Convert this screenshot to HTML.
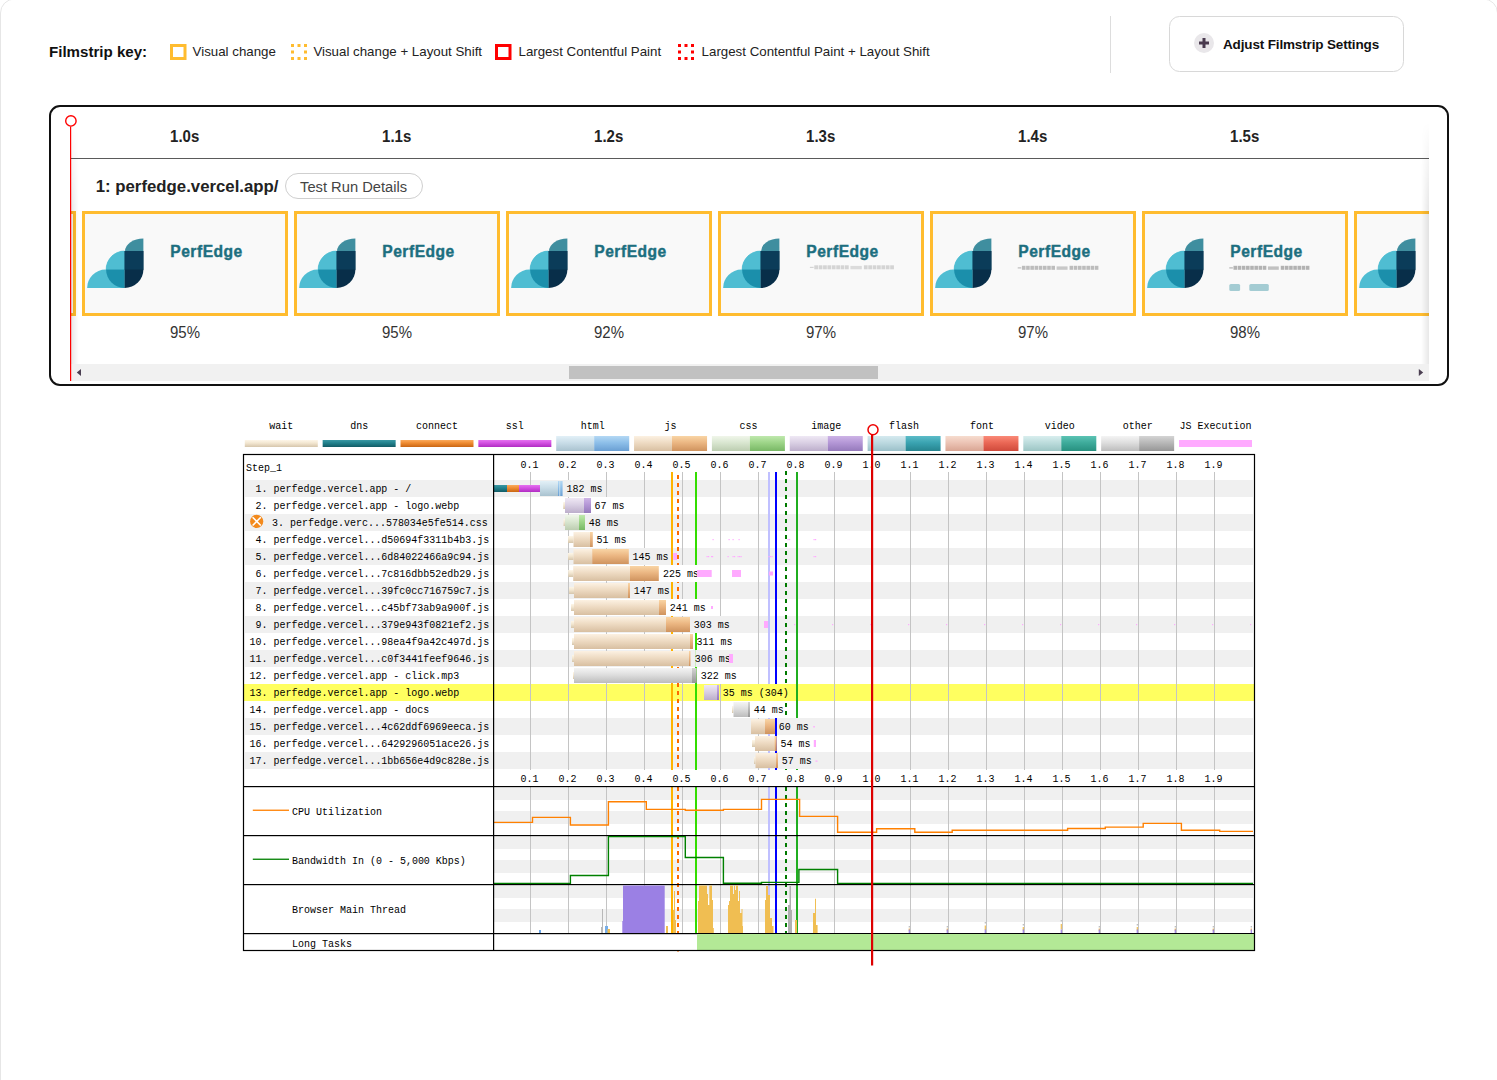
<!DOCTYPE html><html><head><meta charset="utf-8"><style>html,body{margin:0;padding:0;background:#fff;}body{width:1497px;height:1080px;overflow:hidden;position:relative;}svg{position:absolute;left:0;top:0;font-family:"Liberation Sans",sans-serif;}</style></head><body><svg width="1497" height="1080" viewBox="0 0 1497 1080"><rect x="0.5" y="-1" width="1497" height="1300" rx="14" fill="none" stroke="#e6e6e6" stroke-width="1"/>
<text x="49" y="56.9" text-anchor="start" style="font-size:15.1px;font-weight:bold;fill:#111" >Filmstrip key:</text>
<rect x="171.5" y="45.5" width="13.5" height="13" fill="none" stroke="#ffbc2f" stroke-width="3"/>
<text x="192.6" y="55.8" text-anchor="start" style="font-size:13.3px;font-weight:normal;fill:#222" >Visual change</text>
<rect x="291.0" y="44.0" width="3" height="3" fill="#ffbc2f" />
<rect x="291.0" y="50.5" width="3" height="3" fill="#ffbc2f" />
<rect x="291.0" y="57.0" width="3" height="3" fill="#ffbc2f" />
<rect x="297.5" y="44.0" width="3" height="3" fill="#ffbc2f" />
<rect x="297.5" y="57.0" width="3" height="3" fill="#ffbc2f" />
<rect x="304.0" y="44.0" width="3" height="3" fill="#ffbc2f" />
<rect x="304.0" y="50.5" width="3" height="3" fill="#ffbc2f" />
<rect x="304.0" y="57.0" width="3" height="3" fill="#ffbc2f" />
<text x="313.4" y="55.8" text-anchor="start" style="font-size:13.3px;font-weight:normal;fill:#222" >Visual change + Layout Shift</text>
<rect x="496.5" y="45.5" width="13.5" height="13" fill="none" stroke="#ff0000" stroke-width="3"/>
<text x="518.5" y="55.8" text-anchor="start" style="font-size:13.3px;font-weight:normal;fill:#222" >Largest Contentful Paint</text>
<rect x="678.0" y="44.0" width="3" height="3" fill="#ff0000" />
<rect x="678.0" y="50.5" width="3" height="3" fill="#ff0000" />
<rect x="678.0" y="57.0" width="3" height="3" fill="#ff0000" />
<rect x="684.5" y="44.0" width="3" height="3" fill="#ff0000" />
<rect x="684.5" y="57.0" width="3" height="3" fill="#ff0000" />
<rect x="691.0" y="44.0" width="3" height="3" fill="#ff0000" />
<rect x="691.0" y="50.5" width="3" height="3" fill="#ff0000" />
<rect x="691.0" y="57.0" width="3" height="3" fill="#ff0000" />
<text x="701.6" y="55.8" text-anchor="start" style="font-size:13.3px;font-weight:normal;fill:#222" >Largest Contentful Paint + Layout Shift</text>
<rect x="1110" y="16" width="1" height="57" fill="#dddddd" />
<rect x="1169.5" y="16.5" width="234" height="55" rx="10" fill="#fff" stroke="#d8d8d8" stroke-width="1"/>
<circle cx="1204" cy="43" r="10" fill="#e9e7ea"/>
<rect x="1199" y="41.5" width="10" height="3" fill="#4a3a4e" />
<rect x="1202.5" y="38" width="3" height="10" fill="#4a3a4e" />
<text x="1223" y="49.1" text-anchor="start" style="font-size:13.5px;font-weight:bold;fill:#111;letter-spacing:-0.15px" >Adjust Filmstrip Settings</text>
<rect x="50" y="106" width="1398" height="279" rx="10" fill="#fff" stroke="#111" stroke-width="2"/>
<defs><clipPath id="sc"><rect x="71" y="110" width="1358" height="272"/></clipPath><linearGradient id="shl" x1="0" x2="1" y1="0" y2="0"><stop offset="0" stop-color="#000" stop-opacity="0.09"/><stop offset="1" stop-color="#000" stop-opacity="0"/></linearGradient><linearGradient id="shr" x1="1" x2="0" y1="0" y2="0"><stop offset="0" stop-color="#000" stop-opacity="0.09"/><stop offset="1" stop-color="#000" stop-opacity="0"/></linearGradient><linearGradient id="vg" x1="0" x2="0" y1="0" y2="1"><stop offset="0" stop-color="#fff" stop-opacity="0"/><stop offset="0.35" stop-color="#fff" stop-opacity="1"/><stop offset="1" stop-color="#fff" stop-opacity="1"/></linearGradient><mask id="vm" maskUnits="userSpaceOnUse" x="0" y="0" width="1497" height="1080"><rect x="60" y="122" width="1380" height="242" fill="url(#vg)"/></mask></defs>
<g clip-path="url(#sc)">
<text transform="translate(184.7,141.9) scale(1,1.15)" text-anchor="middle" style="font-size:15px;font-weight:bold;fill:#222" >1.0s</text>
<text transform="translate(396.7,141.9) scale(1,1.15)" text-anchor="middle" style="font-size:15px;font-weight:bold;fill:#222" >1.1s</text>
<text transform="translate(608.7,141.9) scale(1,1.15)" text-anchor="middle" style="font-size:15px;font-weight:bold;fill:#222" >1.2s</text>
<text transform="translate(820.7,141.9) scale(1,1.15)" text-anchor="middle" style="font-size:15px;font-weight:bold;fill:#222" >1.3s</text>
<text transform="translate(1032.7,141.9) scale(1,1.15)" text-anchor="middle" style="font-size:15px;font-weight:bold;fill:#222" >1.4s</text>
<text transform="translate(1244.7,141.9) scale(1,1.15)" text-anchor="middle" style="font-size:15px;font-weight:bold;fill:#222" >1.5s</text>
<text transform="translate(1456.7,141.9) scale(1,1.15)" text-anchor="middle" style="font-size:15px;font-weight:bold;fill:#222" >1.6s</text>
<rect x="71" y="158" width="1358" height="1" fill="#5a5a5a" />
<text x="95.7" y="191.7" text-anchor="start" style="font-size:16.8px;font-weight:bold;fill:#222" >1: perfedge.vercel.app/</text>
<rect x="285.5" y="173.5" width="137" height="25" rx="12.5" fill="#fff" stroke="#cfcfcf" stroke-width="1"/>
<text x="300.1" y="191.7" text-anchor="start" style="font-size:14.7px;font-weight:normal;fill:#444" >Test Run Details</text>
<rect x="-128.5" y="212.5" width="203" height="102" fill="#f9f9f9" stroke="#ffbc2f" stroke-width="3"/>
<g transform="translate(-212.9,0)">
<path d="M107 269.5 A18.5 18.5 0 0 1 125.5 251 L125.5 269.5 Z" fill="#4fbdd2" stroke="#4fbdd2" stroke-width="0.6"/>
<rect x="125.2" y="251" width="19.1" height="19" fill="#0b3c59"/>
<path d="M88 288 A18.5 18.5 0 0 1 106.5 269.5 L125.5 269.5 L125.5 288 Z" fill="#4fbdd2"/>
<path d="M107 269.5 A18.5 18.5 0 0 1 125.5 251 L125.5 269.5 Z" fill="#4fbdd2"/>
<path d="M107 269.5 A18.5 18.5 0 0 0 125.5 288 L125.5 269.5 Z" fill="#1b8fab"/>
<path d="M126 251 A18.3 12.4 0 0 1 144.3 238.6 L144.3 251 Z" fill="#3f8e9f"/>
<rect x="125.5" y="251" width="18.8" height="18.5" fill="#0b3c59"/>
<path d="M125.5 269.5 L144.3 269.5 A18.8 18.5 0 0 1 125.5 288 Z" fill="#082e49"/>
</g>
<text x="-41.7" y="256.6" text-anchor="start" style="font-size:15.6px;font-weight:bold;fill:#1c6f80;letter-spacing:0.5px" stroke="#1c6f80" stroke-width="0.4">PerfEdge</text>
<rect x="83.5" y="212.5" width="203" height="102" fill="#f9f9f9" stroke="#ffbc2f" stroke-width="3"/>
<g transform="translate(-0.9,0)">
<path d="M107 269.5 A18.5 18.5 0 0 1 125.5 251 L125.5 269.5 Z" fill="#4fbdd2" stroke="#4fbdd2" stroke-width="0.6"/>
<rect x="125.2" y="251" width="19.1" height="19" fill="#0b3c59"/>
<path d="M88 288 A18.5 18.5 0 0 1 106.5 269.5 L125.5 269.5 L125.5 288 Z" fill="#4fbdd2"/>
<path d="M107 269.5 A18.5 18.5 0 0 1 125.5 251 L125.5 269.5 Z" fill="#4fbdd2"/>
<path d="M107 269.5 A18.5 18.5 0 0 0 125.5 288 L125.5 269.5 Z" fill="#1b8fab"/>
<path d="M126 251 A18.3 12.4 0 0 1 144.3 238.6 L144.3 251 Z" fill="#3f8e9f"/>
<rect x="125.5" y="251" width="18.8" height="18.5" fill="#0b3c59"/>
<path d="M125.5 269.5 L144.3 269.5 A18.8 18.5 0 0 1 125.5 288 Z" fill="#082e49"/>
</g>
<text x="170.3" y="256.6" text-anchor="start" style="font-size:15.6px;font-weight:bold;fill:#1c6f80;letter-spacing:0.5px" stroke="#1c6f80" stroke-width="0.4">PerfEdge</text>
<text transform="translate(185,338) scale(1,1.15)" text-anchor="middle" style="font-size:15px;font-weight:normal;fill:#333" >95%</text>
<rect x="295.5" y="212.5" width="203" height="102" fill="#f9f9f9" stroke="#ffbc2f" stroke-width="3"/>
<g transform="translate(211.1,0)">
<path d="M107 269.5 A18.5 18.5 0 0 1 125.5 251 L125.5 269.5 Z" fill="#4fbdd2" stroke="#4fbdd2" stroke-width="0.6"/>
<rect x="125.2" y="251" width="19.1" height="19" fill="#0b3c59"/>
<path d="M88 288 A18.5 18.5 0 0 1 106.5 269.5 L125.5 269.5 L125.5 288 Z" fill="#4fbdd2"/>
<path d="M107 269.5 A18.5 18.5 0 0 1 125.5 251 L125.5 269.5 Z" fill="#4fbdd2"/>
<path d="M107 269.5 A18.5 18.5 0 0 0 125.5 288 L125.5 269.5 Z" fill="#1b8fab"/>
<path d="M126 251 A18.3 12.4 0 0 1 144.3 238.6 L144.3 251 Z" fill="#3f8e9f"/>
<rect x="125.5" y="251" width="18.8" height="18.5" fill="#0b3c59"/>
<path d="M125.5 269.5 L144.3 269.5 A18.8 18.5 0 0 1 125.5 288 Z" fill="#082e49"/>
</g>
<text x="382.3" y="256.6" text-anchor="start" style="font-size:15.6px;font-weight:bold;fill:#1c6f80;letter-spacing:0.5px" stroke="#1c6f80" stroke-width="0.4">PerfEdge</text>
<text transform="translate(397,338) scale(1,1.15)" text-anchor="middle" style="font-size:15px;font-weight:normal;fill:#333" >95%</text>
<rect x="507.5" y="212.5" width="203" height="102" fill="#f9f9f9" stroke="#ffbc2f" stroke-width="3"/>
<g transform="translate(423.1,0)">
<path d="M107 269.5 A18.5 18.5 0 0 1 125.5 251 L125.5 269.5 Z" fill="#4fbdd2" stroke="#4fbdd2" stroke-width="0.6"/>
<rect x="125.2" y="251" width="19.1" height="19" fill="#0b3c59"/>
<path d="M88 288 A18.5 18.5 0 0 1 106.5 269.5 L125.5 269.5 L125.5 288 Z" fill="#4fbdd2"/>
<path d="M107 269.5 A18.5 18.5 0 0 1 125.5 251 L125.5 269.5 Z" fill="#4fbdd2"/>
<path d="M107 269.5 A18.5 18.5 0 0 0 125.5 288 L125.5 269.5 Z" fill="#1b8fab"/>
<path d="M126 251 A18.3 12.4 0 0 1 144.3 238.6 L144.3 251 Z" fill="#3f8e9f"/>
<rect x="125.5" y="251" width="18.8" height="18.5" fill="#0b3c59"/>
<path d="M125.5 269.5 L144.3 269.5 A18.8 18.5 0 0 1 125.5 288 Z" fill="#082e49"/>
</g>
<text x="594.3" y="256.6" text-anchor="start" style="font-size:15.6px;font-weight:bold;fill:#1c6f80;letter-spacing:0.5px" stroke="#1c6f80" stroke-width="0.4">PerfEdge</text>
<text transform="translate(609,338) scale(1,1.15)" text-anchor="middle" style="font-size:15px;font-weight:normal;fill:#333" >92%</text>
<rect x="719.5" y="212.5" width="203" height="102" fill="#f9f9f9" stroke="#ffbc2f" stroke-width="3"/>
<g transform="translate(635.1,0)">
<path d="M107 269.5 A18.5 18.5 0 0 1 125.5 251 L125.5 269.5 Z" fill="#4fbdd2" stroke="#4fbdd2" stroke-width="0.6"/>
<rect x="125.2" y="251" width="19.1" height="19" fill="#0b3c59"/>
<path d="M88 288 A18.5 18.5 0 0 1 106.5 269.5 L125.5 269.5 L125.5 288 Z" fill="#4fbdd2"/>
<path d="M107 269.5 A18.5 18.5 0 0 1 125.5 251 L125.5 269.5 Z" fill="#4fbdd2"/>
<path d="M107 269.5 A18.5 18.5 0 0 0 125.5 288 L125.5 269.5 Z" fill="#1b8fab"/>
<path d="M126 251 A18.3 12.4 0 0 1 144.3 238.6 L144.3 251 Z" fill="#3f8e9f"/>
<rect x="125.5" y="251" width="18.8" height="18.5" fill="#0b3c59"/>
<path d="M125.5 269.5 L144.3 269.5 A18.8 18.5 0 0 1 125.5 288 Z" fill="#082e49"/>
</g>
<text x="806.3" y="256.6" text-anchor="start" style="font-size:15.6px;font-weight:bold;fill:#1c6f80;letter-spacing:0.5px" stroke="#1c6f80" stroke-width="0.4">PerfEdge</text>
<text transform="translate(821,338) scale(1,1.15)" text-anchor="middle" style="font-size:15px;font-weight:normal;fill:#333" >97%</text>
<g fill="#b0b0b0" opacity="0.5">
<rect x="809.90" y="266.8" width="3.73" height="1.2"/>
<rect x="814.29" y="265.3" width="3.73" height="4"/>
<rect x="818.68" y="265.3" width="3.73" height="4"/>
<rect x="823.06" y="265.3" width="3.73" height="4"/>
<rect x="827.45" y="265.3" width="3.73" height="4"/>
<rect x="831.84" y="265.3" width="3.73" height="4"/>
<rect x="836.23" y="265.3" width="3.73" height="4"/>
<rect x="840.61" y="265.3" width="3.73" height="4"/>
<rect x="845.00" y="265.3" width="3.73" height="4"/>
<rect x="850.41" y="265.90000000000003" width="11.41" height="3.4" opacity="0.8"/>
<rect x="863.87" y="265.3" width="3.73" height="4"/>
<rect x="868.26" y="265.3" width="3.73" height="4"/>
<rect x="872.64" y="265.3" width="3.73" height="4"/>
<rect x="877.03" y="265.3" width="3.73" height="4"/>
<rect x="881.42" y="265.3" width="3.73" height="4"/>
<rect x="885.81" y="265.3" width="3.73" height="4"/>
<rect x="890.20" y="265.3" width="3.73" height="4"/>
</g>
<rect x="931.5" y="212.5" width="203" height="102" fill="#f9f9f9" stroke="#ffbc2f" stroke-width="3"/>
<g transform="translate(847.1,0)">
<path d="M107 269.5 A18.5 18.5 0 0 1 125.5 251 L125.5 269.5 Z" fill="#4fbdd2" stroke="#4fbdd2" stroke-width="0.6"/>
<rect x="125.2" y="251" width="19.1" height="19" fill="#0b3c59"/>
<path d="M88 288 A18.5 18.5 0 0 1 106.5 269.5 L125.5 269.5 L125.5 288 Z" fill="#4fbdd2"/>
<path d="M107 269.5 A18.5 18.5 0 0 1 125.5 251 L125.5 269.5 Z" fill="#4fbdd2"/>
<path d="M107 269.5 A18.5 18.5 0 0 0 125.5 288 L125.5 269.5 Z" fill="#1b8fab"/>
<path d="M126 251 A18.3 12.4 0 0 1 144.3 238.6 L144.3 251 Z" fill="#3f8e9f"/>
<rect x="125.5" y="251" width="18.8" height="18.5" fill="#0b3c59"/>
<path d="M125.5 269.5 L144.3 269.5 A18.8 18.5 0 0 1 125.5 288 Z" fill="#082e49"/>
</g>
<text x="1018.3" y="256.6" text-anchor="start" style="font-size:15.6px;font-weight:bold;fill:#1c6f80;letter-spacing:0.5px" stroke="#1c6f80" stroke-width="0.4">PerfEdge</text>
<text transform="translate(1033,338) scale(1,1.15)" text-anchor="middle" style="font-size:15px;font-weight:normal;fill:#333" >97%</text>
<g fill="#808080" opacity="0.5">
<rect x="1017.70" y="267.3" width="3.58" height="1.2"/>
<rect x="1021.91" y="265.8" width="3.58" height="4"/>
<rect x="1026.13" y="265.8" width="3.58" height="4"/>
<rect x="1030.34" y="265.8" width="3.58" height="4"/>
<rect x="1034.56" y="265.8" width="3.58" height="4"/>
<rect x="1038.77" y="265.8" width="3.58" height="4"/>
<rect x="1042.99" y="265.8" width="3.58" height="4"/>
<rect x="1047.20" y="265.8" width="3.58" height="4"/>
<rect x="1051.41" y="265.8" width="3.58" height="4"/>
<rect x="1056.59" y="266.40000000000003" width="10.96" height="3.4" opacity="0.8"/>
<rect x="1069.54" y="265.8" width="3.58" height="4"/>
<rect x="1073.75" y="265.8" width="3.58" height="4"/>
<rect x="1077.96" y="265.8" width="3.58" height="4"/>
<rect x="1082.18" y="265.8" width="3.58" height="4"/>
<rect x="1086.39" y="265.8" width="3.58" height="4"/>
<rect x="1090.61" y="265.8" width="3.58" height="4"/>
<rect x="1094.82" y="265.8" width="3.58" height="4"/>
</g>
<rect x="1143.5" y="212.5" width="203" height="102" fill="#f9f9f9" stroke="#ffbc2f" stroke-width="3"/>
<g transform="translate(1059.1,0)">
<path d="M107 269.5 A18.5 18.5 0 0 1 125.5 251 L125.5 269.5 Z" fill="#4fbdd2" stroke="#4fbdd2" stroke-width="0.6"/>
<rect x="125.2" y="251" width="19.1" height="19" fill="#0b3c59"/>
<path d="M88 288 A18.5 18.5 0 0 1 106.5 269.5 L125.5 269.5 L125.5 288 Z" fill="#4fbdd2"/>
<path d="M107 269.5 A18.5 18.5 0 0 1 125.5 251 L125.5 269.5 Z" fill="#4fbdd2"/>
<path d="M107 269.5 A18.5 18.5 0 0 0 125.5 288 L125.5 269.5 Z" fill="#1b8fab"/>
<path d="M126 251 A18.3 12.4 0 0 1 144.3 238.6 L144.3 251 Z" fill="#3f8e9f"/>
<rect x="125.5" y="251" width="18.8" height="18.5" fill="#0b3c59"/>
<path d="M125.5 269.5 L144.3 269.5 A18.8 18.5 0 0 1 125.5 288 Z" fill="#082e49"/>
</g>
<text x="1230.3" y="256.6" text-anchor="start" style="font-size:15.6px;font-weight:bold;fill:#1c6f80;letter-spacing:0.5px" stroke="#1c6f80" stroke-width="0.4">PerfEdge</text>
<text transform="translate(1245,338) scale(1,1.15)" text-anchor="middle" style="font-size:15px;font-weight:normal;fill:#333" >98%</text>
<g fill="#6e6e6e" opacity="0.5">
<rect x="1229.30" y="267.3" width="3.56" height="1.2"/>
<rect x="1233.48" y="265.8" width="3.56" height="4"/>
<rect x="1237.67" y="265.8" width="3.56" height="4"/>
<rect x="1241.85" y="265.8" width="3.56" height="4"/>
<rect x="1246.03" y="265.8" width="3.56" height="4"/>
<rect x="1250.22" y="265.8" width="3.56" height="4"/>
<rect x="1254.40" y="265.8" width="3.56" height="4"/>
<rect x="1258.59" y="265.8" width="3.56" height="4"/>
<rect x="1262.77" y="265.8" width="3.56" height="4"/>
<rect x="1267.91" y="266.40000000000003" width="10.88" height="3.4" opacity="0.8"/>
<rect x="1280.76" y="265.8" width="3.56" height="4"/>
<rect x="1284.94" y="265.8" width="3.56" height="4"/>
<rect x="1289.13" y="265.8" width="3.56" height="4"/>
<rect x="1293.31" y="265.8" width="3.56" height="4"/>
<rect x="1297.49" y="265.8" width="3.56" height="4"/>
<rect x="1301.68" y="265.8" width="3.56" height="4"/>
<rect x="1305.86" y="265.8" width="3.56" height="4"/>
</g>
<rect x="1229.3" y="284" width="10.8" height="7" rx="1.5" fill="#a4ccd3"/>
<rect x="1249.3" y="284" width="19.5" height="7" rx="1.5" fill="#a4ccd3"/>
<rect x="1355.5" y="212.5" width="203" height="102" fill="#f9f9f9" stroke="#ffbc2f" stroke-width="3"/>
<g transform="translate(1271.1,0)">
<path d="M107 269.5 A18.5 18.5 0 0 1 125.5 251 L125.5 269.5 Z" fill="#4fbdd2" stroke="#4fbdd2" stroke-width="0.6"/>
<rect x="125.2" y="251" width="19.1" height="19" fill="#0b3c59"/>
<path d="M88 288 A18.5 18.5 0 0 1 106.5 269.5 L125.5 269.5 L125.5 288 Z" fill="#4fbdd2"/>
<path d="M107 269.5 A18.5 18.5 0 0 1 125.5 251 L125.5 269.5 Z" fill="#4fbdd2"/>
<path d="M107 269.5 A18.5 18.5 0 0 0 125.5 288 L125.5 269.5 Z" fill="#1b8fab"/>
<path d="M126 251 A18.3 12.4 0 0 1 144.3 238.6 L144.3 251 Z" fill="#3f8e9f"/>
<rect x="125.5" y="251" width="18.8" height="18.5" fill="#0b3c59"/>
<path d="M125.5 269.5 L144.3 269.5 A18.8 18.5 0 0 1 125.5 288 Z" fill="#082e49"/>
</g>
<text x="1442.3" y="256.6" text-anchor="start" style="font-size:15.6px;font-weight:bold;fill:#1c6f80;letter-spacing:0.5px" stroke="#1c6f80" stroke-width="0.4">PerfEdge</text>
<text transform="translate(1457,338) scale(1,1.15)" text-anchor="middle" style="font-size:15px;font-weight:normal;fill:#333" >98%</text>
<g fill="#6e6e6e" opacity="0.5">
<rect x="1441.30" y="267.3" width="3.56" height="1.2"/>
<rect x="1445.48" y="265.8" width="3.56" height="4"/>
<rect x="1449.67" y="265.8" width="3.56" height="4"/>
<rect x="1453.85" y="265.8" width="3.56" height="4"/>
<rect x="1458.03" y="265.8" width="3.56" height="4"/>
<rect x="1462.22" y="265.8" width="3.56" height="4"/>
<rect x="1466.40" y="265.8" width="3.56" height="4"/>
<rect x="1470.59" y="265.8" width="3.56" height="4"/>
<rect x="1474.77" y="265.8" width="3.56" height="4"/>
<rect x="1479.91" y="266.40000000000003" width="10.88" height="3.4" opacity="0.8"/>
<rect x="1492.76" y="265.8" width="3.56" height="4"/>
<rect x="1496.94" y="265.8" width="3.56" height="4"/>
<rect x="1501.13" y="265.8" width="3.56" height="4"/>
<rect x="1505.31" y="265.8" width="3.56" height="4"/>
<rect x="1509.49" y="265.8" width="3.56" height="4"/>
<rect x="1513.68" y="265.8" width="3.56" height="4"/>
<rect x="1517.86" y="265.8" width="3.56" height="4"/>
</g>
<rect x="1441.3" y="284" width="10.8" height="7" rx="1.5" fill="#a4ccd3"/>
<rect x="1461.3" y="284" width="19.5" height="7" rx="1.5" fill="#a4ccd3"/>
<g mask="url(#vm)">
<rect x="71" y="120" width="8" height="244" fill="url(#shl)" />
<rect x="1421" y="120" width="8" height="244" fill="url(#shr)" />
</g>
</g>
<rect x="71" y="364" width="1358" height="17" fill="#f1f1f1" />
<rect x="569" y="366" width="309" height="13" fill="#c1c1c1" />
<path d="M81 368.9 L81 376 L76.8 372.45 Z" fill="#4b3f52"/>
<path d="M1418.8 368.9 L1418.8 376 L1423.2 372.45 Z" fill="#4b3f52"/>
<rect x="70" y="126.5" width="1.2" height="254.5" fill="#ff0000" />
<circle cx="70.9" cy="120.9" r="5.2" fill="none" stroke="#ff0000" stroke-width="1.4"/>
<defs><linearGradient id="gjsL" x1="0" x2="0" y1="0" y2="1"><stop offset="0" stop-color="#fcf1e2"/><stop offset="0.45" stop-color="#eedbc3"/><stop offset="1" stop-color="#d8bfa1"/></linearGradient><linearGradient id="gjsD" x1="0" x2="0" y1="0" y2="1"><stop offset="0" stop-color="#f9d5a5"/><stop offset="0.45" stop-color="#ebb682"/><stop offset="1" stop-color="#cf935e"/></linearGradient><linearGradient id="ghtmlL" x1="0" x2="0" y1="0" y2="1"><stop offset="0" stop-color="#e2f0f7"/><stop offset="0.45" stop-color="#c9dde8"/><stop offset="1" stop-color="#a9c2cf"/></linearGradient><linearGradient id="ghtmlD" x1="0" x2="0" y1="0" y2="1"><stop offset="0" stop-color="#b4d8f4"/><stop offset="0.45" stop-color="#8dbfe9"/><stop offset="1" stop-color="#6a9fd3"/></linearGradient><linearGradient id="gcssL" x1="0" x2="0" y1="0" y2="1"><stop offset="0" stop-color="#f0f6ea"/><stop offset="0.45" stop-color="#d9e6d0"/><stop offset="1" stop-color="#bccdb0"/></linearGradient><linearGradient id="gcssD" x1="0" x2="0" y1="0" y2="1"><stop offset="0" stop-color="#bfe8ad"/><stop offset="0.45" stop-color="#9dd588"/><stop offset="1" stop-color="#78b865"/></linearGradient><linearGradient id="gimgL" x1="0" x2="0" y1="0" y2="1"><stop offset="0" stop-color="#efe8f5"/><stop offset="0.45" stop-color="#dad0e4"/><stop offset="1" stop-color="#bcaecb"/></linearGradient><linearGradient id="gimgD" x1="0" x2="0" y1="0" y2="1"><stop offset="0" stop-color="#cdb3e6"/><stop offset="0.45" stop-color="#b497d6"/><stop offset="1" stop-color="#957abb"/></linearGradient><linearGradient id="gothL" x1="0" x2="0" y1="0" y2="1"><stop offset="0" stop-color="#f4f4f4"/><stop offset="0.45" stop-color="#dedede"/><stop offset="1" stop-color="#bcbcbc"/></linearGradient><linearGradient id="gothD" x1="0" x2="0" y1="0" y2="1"><stop offset="0" stop-color="#d4d4d4"/><stop offset="0.45" stop-color="#b8b8b8"/><stop offset="1" stop-color="#969696"/></linearGradient><linearGradient id="gdns" x1="0" x2="0" y1="0" y2="1"><stop offset="0" stop-color="#3a98a4"/><stop offset="0.45" stop-color="#21808b"/><stop offset="1" stop-color="#125c66"/></linearGradient><linearGradient id="gcon" x1="0" x2="0" y1="0" y2="1"><stop offset="0" stop-color="#fbaa5c"/><stop offset="0.45" stop-color="#ee8a30"/><stop offset="1" stop-color="#c96614"/></linearGradient><linearGradient id="gssl" x1="0" x2="0" y1="0" y2="1"><stop offset="0" stop-color="#e571f0"/><stop offset="0.45" stop-color="#d24fe0"/><stop offset="1" stop-color="#b02cc2"/></linearGradient><linearGradient id="gwait" x1="0" x2="0" y1="0" y2="1"><stop offset="0" stop-color="#fdf6e8"/><stop offset="0.45" stop-color="#f2e6d0"/><stop offset="1" stop-color="#d6c6ac"/></linearGradient><linearGradient id="gflL" x1="0" x2="0" y1="0" y2="1"><stop offset="0" stop-color="#d5eaef"/><stop offset="0.45" stop-color="#bcd9e0"/><stop offset="1" stop-color="#9bc0c9"/></linearGradient><linearGradient id="gflD" x1="0" x2="0" y1="0" y2="1"><stop offset="0" stop-color="#5cbcc8"/><stop offset="0.45" stop-color="#3aa3b1"/><stop offset="1" stop-color="#26848f"/></linearGradient><linearGradient id="gfoL" x1="0" x2="0" y1="0" y2="1"><stop offset="0" stop-color="#f6dccf"/><stop offset="0.45" stop-color="#ecc4b5"/><stop offset="1" stop-color="#d9a593"/></linearGradient><linearGradient id="gfoD" x1="0" x2="0" y1="0" y2="1"><stop offset="0" stop-color="#fa8a78"/><stop offset="0.45" stop-color="#ea6755"/><stop offset="1" stop-color="#cf4a3b"/></linearGradient><linearGradient id="gviL" x1="0" x2="0" y1="0" y2="1"><stop offset="0" stop-color="#d8eeee"/><stop offset="0.45" stop-color="#bcdcdc"/><stop offset="1" stop-color="#9cc5c4"/></linearGradient><linearGradient id="gviD" x1="0" x2="0" y1="0" y2="1"><stop offset="0" stop-color="#5cc3b4"/><stop offset="0.45" stop-color="#3eab9b"/><stop offset="1" stop-color="#27907f"/></linearGradient></defs>
<text transform="translate(281.3,429.4) scale(1,1.1)" text-anchor="middle" style="font-family:'Liberation Mono', monospace;font-size:10px;fill:#000;white-space:pre" xml:space="preserve">wait</text>
<rect x="244.8" y="440" width="73" height="7" fill="url(#gwait)" />
<text transform="translate(359.15,429.4) scale(1,1.1)" text-anchor="middle" style="font-family:'Liberation Mono', monospace;font-size:10px;fill:#000;white-space:pre" xml:space="preserve">dns</text>
<rect x="322.65" y="440" width="73" height="7" fill="url(#gdns)" />
<text transform="translate(437.0,429.4) scale(1,1.1)" text-anchor="middle" style="font-family:'Liberation Mono', monospace;font-size:10px;fill:#000;white-space:pre" xml:space="preserve">connect</text>
<rect x="400.5" y="440" width="73" height="7" fill="url(#gcon)" />
<text transform="translate(514.85,429.4) scale(1,1.1)" text-anchor="middle" style="font-family:'Liberation Mono', monospace;font-size:10px;fill:#000;white-space:pre" xml:space="preserve">ssl</text>
<rect x="478.35" y="440" width="73" height="7" fill="url(#gssl)" />
<text transform="translate(592.7,429.4) scale(1,1.1)" text-anchor="middle" style="font-family:'Liberation Mono', monospace;font-size:10px;fill:#000;white-space:pre" xml:space="preserve">html</text>
<rect x="556.2" y="436" width="37.96" height="15" fill="url(#ghtmlL)" />
<rect x="594.1600000000001" y="436" width="35.04" height="15" fill="url(#ghtmlD)" />
<text transform="translate(670.55,429.4) scale(1,1.1)" text-anchor="middle" style="font-family:'Liberation Mono', monospace;font-size:10px;fill:#000;white-space:pre" xml:space="preserve">js</text>
<rect x="634.05" y="436" width="37.96" height="15" fill="url(#gjsL)" />
<rect x="672.01" y="436" width="35.04" height="15" fill="url(#gjsD)" />
<text transform="translate(748.4,429.4) scale(1,1.1)" text-anchor="middle" style="font-family:'Liberation Mono', monospace;font-size:10px;fill:#000;white-space:pre" xml:space="preserve">css</text>
<rect x="711.9" y="436" width="37.96" height="15" fill="url(#gcssL)" />
<rect x="749.86" y="436" width="35.04" height="15" fill="url(#gcssD)" />
<text transform="translate(826.25,429.4) scale(1,1.1)" text-anchor="middle" style="font-family:'Liberation Mono', monospace;font-size:10px;fill:#000;white-space:pre" xml:space="preserve">image</text>
<rect x="789.75" y="436" width="37.96" height="15" fill="url(#gimgL)" />
<rect x="827.71" y="436" width="35.04" height="15" fill="url(#gimgD)" />
<text transform="translate(904.0999999999999,429.4) scale(1,1.1)" text-anchor="middle" style="font-family:'Liberation Mono', monospace;font-size:10px;fill:#000;white-space:pre" xml:space="preserve">flash</text>
<rect x="867.5999999999999" y="436" width="37.96" height="15" fill="url(#gflL)" />
<rect x="905.56" y="436" width="35.04" height="15" fill="url(#gflD)" />
<text transform="translate(981.95,429.4) scale(1,1.1)" text-anchor="middle" style="font-family:'Liberation Mono', monospace;font-size:10px;fill:#000;white-space:pre" xml:space="preserve">font</text>
<rect x="945.45" y="436" width="37.96" height="15" fill="url(#gfoL)" />
<rect x="983.4100000000001" y="436" width="35.04" height="15" fill="url(#gfoD)" />
<text transform="translate(1059.8,429.4) scale(1,1.1)" text-anchor="middle" style="font-family:'Liberation Mono', monospace;font-size:10px;fill:#000;white-space:pre" xml:space="preserve">video</text>
<rect x="1023.3" y="436" width="37.96" height="15" fill="url(#gviL)" />
<rect x="1061.26" y="436" width="35.04" height="15" fill="url(#gviD)" />
<text transform="translate(1137.6499999999999,429.4) scale(1,1.1)" text-anchor="middle" style="font-family:'Liberation Mono', monospace;font-size:10px;fill:#000;white-space:pre" xml:space="preserve">other</text>
<rect x="1101.1499999999999" y="436" width="37.96" height="15" fill="url(#gothL)" />
<rect x="1139.11" y="436" width="35.04" height="15" fill="url(#gothD)" />
<text transform="translate(1215.5,429.4) scale(1,1.1)" text-anchor="middle" style="font-family:'Liberation Mono', monospace;font-size:10px;fill:#000;white-space:pre" xml:space="preserve">JS Execution</text>
<rect x="1179.0" y="440" width="73" height="7" fill="#ffaaff" />
<rect x="243" y="454" width="1011" height="496" fill="#fff" />
<rect x="245" y="480" width="1008" height="17" fill="#f0f0f0" />
<rect x="245" y="514" width="1008" height="17" fill="#f0f0f0" />
<rect x="245" y="548" width="1008" height="17" fill="#f0f0f0" />
<rect x="245" y="582" width="1008" height="17" fill="#f0f0f0" />
<rect x="245" y="616" width="1008" height="17" fill="#f0f0f0" />
<rect x="245" y="650" width="1008" height="17" fill="#f0f0f0" />
<rect x="244" y="684" width="1010" height="17" fill="#ffff60" />
<rect x="245" y="718" width="1008" height="17" fill="#f0f0f0" />
<rect x="245" y="752" width="1008" height="17" fill="#f0f0f0" />
<rect x="494" y="788" width="759" height="12" fill="#f0f0f0" />
<rect x="494" y="811" width="759" height="13" fill="#f0f0f0" />
<rect x="494" y="837" width="759" height="12" fill="#f0f0f0" />
<rect x="494" y="860" width="759" height="13" fill="#f0f0f0" />
<rect x="494" y="886" width="759" height="12" fill="#f0f0f0" />
<rect x="494" y="909" width="759" height="13" fill="#f0f0f0" />
<rect x="530" y="472" width="1" height="298" fill="#c4c4c4" />
<rect x="530" y="786" width="1" height="49" fill="#c4c4c4" />
<rect x="530" y="835" width="1" height="49" fill="#c4c4c4" />
<rect x="530" y="884" width="1" height="49" fill="#c4c4c4" />
<rect x="568" y="472" width="1" height="298" fill="#c4c4c4" />
<rect x="568" y="786" width="1" height="49" fill="#c4c4c4" />
<rect x="568" y="835" width="1" height="49" fill="#c4c4c4" />
<rect x="568" y="884" width="1" height="49" fill="#c4c4c4" />
<rect x="606" y="472" width="1" height="298" fill="#c4c4c4" />
<rect x="606" y="786" width="1" height="49" fill="#c4c4c4" />
<rect x="606" y="835" width="1" height="49" fill="#c4c4c4" />
<rect x="606" y="884" width="1" height="49" fill="#c4c4c4" />
<rect x="644" y="472" width="1" height="298" fill="#c4c4c4" />
<rect x="644" y="786" width="1" height="49" fill="#c4c4c4" />
<rect x="644" y="835" width="1" height="49" fill="#c4c4c4" />
<rect x="644" y="884" width="1" height="49" fill="#c4c4c4" />
<rect x="682" y="472" width="1" height="298" fill="#c4c4c4" />
<rect x="682" y="786" width="1" height="49" fill="#c4c4c4" />
<rect x="682" y="835" width="1" height="49" fill="#c4c4c4" />
<rect x="682" y="884" width="1" height="49" fill="#c4c4c4" />
<rect x="720" y="472" width="1" height="298" fill="#c4c4c4" />
<rect x="720" y="786" width="1" height="49" fill="#c4c4c4" />
<rect x="720" y="835" width="1" height="49" fill="#c4c4c4" />
<rect x="720" y="884" width="1" height="49" fill="#c4c4c4" />
<rect x="758" y="472" width="1" height="298" fill="#c4c4c4" />
<rect x="758" y="786" width="1" height="49" fill="#c4c4c4" />
<rect x="758" y="835" width="1" height="49" fill="#c4c4c4" />
<rect x="758" y="884" width="1" height="49" fill="#c4c4c4" />
<rect x="796" y="472" width="1" height="298" fill="#c4c4c4" />
<rect x="796" y="786" width="1" height="49" fill="#c4c4c4" />
<rect x="796" y="835" width="1" height="49" fill="#c4c4c4" />
<rect x="796" y="884" width="1" height="49" fill="#c4c4c4" />
<rect x="834" y="472" width="1" height="298" fill="#c4c4c4" />
<rect x="834" y="786" width="1" height="49" fill="#c4c4c4" />
<rect x="834" y="835" width="1" height="49" fill="#c4c4c4" />
<rect x="834" y="884" width="1" height="49" fill="#c4c4c4" />
<rect x="872" y="472" width="1" height="298" fill="#c4c4c4" />
<rect x="872" y="786" width="1" height="49" fill="#c4c4c4" />
<rect x="872" y="835" width="1" height="49" fill="#c4c4c4" />
<rect x="872" y="884" width="1" height="49" fill="#c4c4c4" />
<rect x="910" y="472" width="1" height="298" fill="#c4c4c4" />
<rect x="910" y="786" width="1" height="49" fill="#c4c4c4" />
<rect x="910" y="835" width="1" height="49" fill="#c4c4c4" />
<rect x="910" y="884" width="1" height="49" fill="#c4c4c4" />
<rect x="948" y="472" width="1" height="298" fill="#c4c4c4" />
<rect x="948" y="786" width="1" height="49" fill="#c4c4c4" />
<rect x="948" y="835" width="1" height="49" fill="#c4c4c4" />
<rect x="948" y="884" width="1" height="49" fill="#c4c4c4" />
<rect x="986" y="472" width="1" height="298" fill="#c4c4c4" />
<rect x="986" y="786" width="1" height="49" fill="#c4c4c4" />
<rect x="986" y="835" width="1" height="49" fill="#c4c4c4" />
<rect x="986" y="884" width="1" height="49" fill="#c4c4c4" />
<rect x="1024" y="472" width="1" height="298" fill="#c4c4c4" />
<rect x="1024" y="786" width="1" height="49" fill="#c4c4c4" />
<rect x="1024" y="835" width="1" height="49" fill="#c4c4c4" />
<rect x="1024" y="884" width="1" height="49" fill="#c4c4c4" />
<rect x="1062" y="472" width="1" height="298" fill="#c4c4c4" />
<rect x="1062" y="786" width="1" height="49" fill="#c4c4c4" />
<rect x="1062" y="835" width="1" height="49" fill="#c4c4c4" />
<rect x="1062" y="884" width="1" height="49" fill="#c4c4c4" />
<rect x="1100" y="472" width="1" height="298" fill="#c4c4c4" />
<rect x="1100" y="786" width="1" height="49" fill="#c4c4c4" />
<rect x="1100" y="835" width="1" height="49" fill="#c4c4c4" />
<rect x="1100" y="884" width="1" height="49" fill="#c4c4c4" />
<rect x="1138" y="472" width="1" height="298" fill="#c4c4c4" />
<rect x="1138" y="786" width="1" height="49" fill="#c4c4c4" />
<rect x="1138" y="835" width="1" height="49" fill="#c4c4c4" />
<rect x="1138" y="884" width="1" height="49" fill="#c4c4c4" />
<rect x="1176" y="472" width="1" height="298" fill="#c4c4c4" />
<rect x="1176" y="786" width="1" height="49" fill="#c4c4c4" />
<rect x="1176" y="835" width="1" height="49" fill="#c4c4c4" />
<rect x="1176" y="884" width="1" height="49" fill="#c4c4c4" />
<rect x="1214" y="472" width="1" height="298" fill="#c4c4c4" />
<rect x="1214" y="786" width="1" height="49" fill="#c4c4c4" />
<rect x="1214" y="835" width="1" height="49" fill="#c4c4c4" />
<rect x="1214" y="884" width="1" height="49" fill="#c4c4c4" />
<text transform="translate(520.4,468.2) scale(1,1.1)" text-anchor="start" style="font-family:'Liberation Mono', monospace;font-size:10px;fill:#000;white-space:pre" xml:space="preserve">0.1</text>
<text transform="translate(520.6,782.1) scale(1,1.1)" text-anchor="start" style="font-family:'Liberation Mono', monospace;font-size:10px;fill:#000;white-space:pre" xml:space="preserve">0.1</text>
<text transform="translate(558.4,468.2) scale(1,1.1)" text-anchor="start" style="font-family:'Liberation Mono', monospace;font-size:10px;fill:#000;white-space:pre" xml:space="preserve">0.2</text>
<text transform="translate(558.6,782.1) scale(1,1.1)" text-anchor="start" style="font-family:'Liberation Mono', monospace;font-size:10px;fill:#000;white-space:pre" xml:space="preserve">0.2</text>
<text transform="translate(596.4,468.2) scale(1,1.1)" text-anchor="start" style="font-family:'Liberation Mono', monospace;font-size:10px;fill:#000;white-space:pre" xml:space="preserve">0.3</text>
<text transform="translate(596.6,782.1) scale(1,1.1)" text-anchor="start" style="font-family:'Liberation Mono', monospace;font-size:10px;fill:#000;white-space:pre" xml:space="preserve">0.3</text>
<text transform="translate(634.4,468.2) scale(1,1.1)" text-anchor="start" style="font-family:'Liberation Mono', monospace;font-size:10px;fill:#000;white-space:pre" xml:space="preserve">0.4</text>
<text transform="translate(634.6,782.1) scale(1,1.1)" text-anchor="start" style="font-family:'Liberation Mono', monospace;font-size:10px;fill:#000;white-space:pre" xml:space="preserve">0.4</text>
<text transform="translate(672.4,468.2) scale(1,1.1)" text-anchor="start" style="font-family:'Liberation Mono', monospace;font-size:10px;fill:#000;white-space:pre" xml:space="preserve">0.5</text>
<text transform="translate(672.6,782.1) scale(1,1.1)" text-anchor="start" style="font-family:'Liberation Mono', monospace;font-size:10px;fill:#000;white-space:pre" xml:space="preserve">0.5</text>
<text transform="translate(710.4,468.2) scale(1,1.1)" text-anchor="start" style="font-family:'Liberation Mono', monospace;font-size:10px;fill:#000;white-space:pre" xml:space="preserve">0.6</text>
<text transform="translate(710.6,782.1) scale(1,1.1)" text-anchor="start" style="font-family:'Liberation Mono', monospace;font-size:10px;fill:#000;white-space:pre" xml:space="preserve">0.6</text>
<text transform="translate(748.4,468.2) scale(1,1.1)" text-anchor="start" style="font-family:'Liberation Mono', monospace;font-size:10px;fill:#000;white-space:pre" xml:space="preserve">0.7</text>
<text transform="translate(748.6,782.1) scale(1,1.1)" text-anchor="start" style="font-family:'Liberation Mono', monospace;font-size:10px;fill:#000;white-space:pre" xml:space="preserve">0.7</text>
<text transform="translate(786.4,468.2) scale(1,1.1)" text-anchor="start" style="font-family:'Liberation Mono', monospace;font-size:10px;fill:#000;white-space:pre" xml:space="preserve">0.8</text>
<text transform="translate(786.6,782.1) scale(1,1.1)" text-anchor="start" style="font-family:'Liberation Mono', monospace;font-size:10px;fill:#000;white-space:pre" xml:space="preserve">0.8</text>
<text transform="translate(824.4,468.2) scale(1,1.1)" text-anchor="start" style="font-family:'Liberation Mono', monospace;font-size:10px;fill:#000;white-space:pre" xml:space="preserve">0.9</text>
<text transform="translate(824.6,782.1) scale(1,1.1)" text-anchor="start" style="font-family:'Liberation Mono', monospace;font-size:10px;fill:#000;white-space:pre" xml:space="preserve">0.9</text>
<text transform="translate(862.4,468.2) scale(1,1.1)" text-anchor="start" style="font-family:'Liberation Mono', monospace;font-size:10px;fill:#000;white-space:pre" xml:space="preserve">1.0</text>
<text transform="translate(862.6,782.1) scale(1,1.1)" text-anchor="start" style="font-family:'Liberation Mono', monospace;font-size:10px;fill:#000;white-space:pre" xml:space="preserve">1.0</text>
<text transform="translate(900.4,468.2) scale(1,1.1)" text-anchor="start" style="font-family:'Liberation Mono', monospace;font-size:10px;fill:#000;white-space:pre" xml:space="preserve">1.1</text>
<text transform="translate(900.6,782.1) scale(1,1.1)" text-anchor="start" style="font-family:'Liberation Mono', monospace;font-size:10px;fill:#000;white-space:pre" xml:space="preserve">1.1</text>
<text transform="translate(938.4,468.2) scale(1,1.1)" text-anchor="start" style="font-family:'Liberation Mono', monospace;font-size:10px;fill:#000;white-space:pre" xml:space="preserve">1.2</text>
<text transform="translate(938.6,782.1) scale(1,1.1)" text-anchor="start" style="font-family:'Liberation Mono', monospace;font-size:10px;fill:#000;white-space:pre" xml:space="preserve">1.2</text>
<text transform="translate(976.4,468.2) scale(1,1.1)" text-anchor="start" style="font-family:'Liberation Mono', monospace;font-size:10px;fill:#000;white-space:pre" xml:space="preserve">1.3</text>
<text transform="translate(976.6,782.1) scale(1,1.1)" text-anchor="start" style="font-family:'Liberation Mono', monospace;font-size:10px;fill:#000;white-space:pre" xml:space="preserve">1.3</text>
<text transform="translate(1014.4,468.2) scale(1,1.1)" text-anchor="start" style="font-family:'Liberation Mono', monospace;font-size:10px;fill:#000;white-space:pre" xml:space="preserve">1.4</text>
<text transform="translate(1014.6,782.1) scale(1,1.1)" text-anchor="start" style="font-family:'Liberation Mono', monospace;font-size:10px;fill:#000;white-space:pre" xml:space="preserve">1.4</text>
<text transform="translate(1052.4,468.2) scale(1,1.1)" text-anchor="start" style="font-family:'Liberation Mono', monospace;font-size:10px;fill:#000;white-space:pre" xml:space="preserve">1.5</text>
<text transform="translate(1052.6,782.1) scale(1,1.1)" text-anchor="start" style="font-family:'Liberation Mono', monospace;font-size:10px;fill:#000;white-space:pre" xml:space="preserve">1.5</text>
<text transform="translate(1090.4,468.2) scale(1,1.1)" text-anchor="start" style="font-family:'Liberation Mono', monospace;font-size:10px;fill:#000;white-space:pre" xml:space="preserve">1.6</text>
<text transform="translate(1090.6,782.1) scale(1,1.1)" text-anchor="start" style="font-family:'Liberation Mono', monospace;font-size:10px;fill:#000;white-space:pre" xml:space="preserve">1.6</text>
<text transform="translate(1128.4,468.2) scale(1,1.1)" text-anchor="start" style="font-family:'Liberation Mono', monospace;font-size:10px;fill:#000;white-space:pre" xml:space="preserve">1.7</text>
<text transform="translate(1128.6,782.1) scale(1,1.1)" text-anchor="start" style="font-family:'Liberation Mono', monospace;font-size:10px;fill:#000;white-space:pre" xml:space="preserve">1.7</text>
<text transform="translate(1166.4,468.2) scale(1,1.1)" text-anchor="start" style="font-family:'Liberation Mono', monospace;font-size:10px;fill:#000;white-space:pre" xml:space="preserve">1.8</text>
<text transform="translate(1166.6,782.1) scale(1,1.1)" text-anchor="start" style="font-family:'Liberation Mono', monospace;font-size:10px;fill:#000;white-space:pre" xml:space="preserve">1.8</text>
<text transform="translate(1204.4,468.2) scale(1,1.1)" text-anchor="start" style="font-family:'Liberation Mono', monospace;font-size:10px;fill:#000;white-space:pre" xml:space="preserve">1.9</text>
<text transform="translate(1204.6,782.1) scale(1,1.1)" text-anchor="start" style="font-family:'Liberation Mono', monospace;font-size:10px;fill:#000;white-space:pre" xml:space="preserve">1.9</text>
<text transform="translate(246,470.6) scale(1,1.1)" text-anchor="start" style="font-family:'Liberation Mono', monospace;font-size:10px;fill:#000;white-space:pre" xml:space="preserve">Step_1</text>
<text transform="translate(249.5,491.8) scale(1,1.1)" text-anchor="start" style="font-family:'Liberation Mono', monospace;font-size:10px;fill:#000;white-space:pre" xml:space="preserve"> 1. perfedge.vercel.app - /</text>
<text transform="translate(249.5,508.8) scale(1,1.1)" text-anchor="start" style="font-family:'Liberation Mono', monospace;font-size:10px;fill:#000;white-space:pre" xml:space="preserve"> 2. perfedge.vercel.app - logo.webp</text>
<text transform="translate(272,525.8) scale(1,1.1)" text-anchor="start" style="font-family:'Liberation Mono', monospace;font-size:10px;fill:#000;white-space:pre" xml:space="preserve">3. perfedge.verc...578034e5fe514.css</text>
<text transform="translate(249.5,542.8) scale(1,1.1)" text-anchor="start" style="font-family:'Liberation Mono', monospace;font-size:10px;fill:#000;white-space:pre" xml:space="preserve"> 4. perfedge.vercel...d50694f3311b4b3.js</text>
<text transform="translate(249.5,559.8) scale(1,1.1)" text-anchor="start" style="font-family:'Liberation Mono', monospace;font-size:10px;fill:#000;white-space:pre" xml:space="preserve"> 5. perfedge.vercel...6d84022466a9c94.js</text>
<text transform="translate(249.5,576.8) scale(1,1.1)" text-anchor="start" style="font-family:'Liberation Mono', monospace;font-size:10px;fill:#000;white-space:pre" xml:space="preserve"> 6. perfedge.vercel...7c816dbb52edb29.js</text>
<text transform="translate(249.5,593.8) scale(1,1.1)" text-anchor="start" style="font-family:'Liberation Mono', monospace;font-size:10px;fill:#000;white-space:pre" xml:space="preserve"> 7. perfedge.vercel...39fc0cc716759c7.js</text>
<text transform="translate(249.5,610.8) scale(1,1.1)" text-anchor="start" style="font-family:'Liberation Mono', monospace;font-size:10px;fill:#000;white-space:pre" xml:space="preserve"> 8. perfedge.vercel...c45bf73ab9a900f.js</text>
<text transform="translate(249.5,627.8) scale(1,1.1)" text-anchor="start" style="font-family:'Liberation Mono', monospace;font-size:10px;fill:#000;white-space:pre" xml:space="preserve"> 9. perfedge.vercel...379e943f0821ef2.js</text>
<text transform="translate(249.5,644.8) scale(1,1.1)" text-anchor="start" style="font-family:'Liberation Mono', monospace;font-size:10px;fill:#000;white-space:pre" xml:space="preserve">10. perfedge.vercel...98ea4f9a42c497d.js</text>
<text transform="translate(249.5,661.8) scale(1,1.1)" text-anchor="start" style="font-family:'Liberation Mono', monospace;font-size:10px;fill:#000;white-space:pre" xml:space="preserve">11. perfedge.vercel...c0f3441feef9646.js</text>
<text transform="translate(249.5,678.8) scale(1,1.1)" text-anchor="start" style="font-family:'Liberation Mono', monospace;font-size:10px;fill:#000;white-space:pre" xml:space="preserve">12. perfedge.vercel.app - click.mp3</text>
<text transform="translate(249.5,695.8) scale(1,1.1)" text-anchor="start" style="font-family:'Liberation Mono', monospace;font-size:10px;fill:#000;white-space:pre" xml:space="preserve">13. perfedge.vercel.app - logo.webp</text>
<text transform="translate(249.5,712.8) scale(1,1.1)" text-anchor="start" style="font-family:'Liberation Mono', monospace;font-size:10px;fill:#000;white-space:pre" xml:space="preserve">14. perfedge.vercel.app - docs</text>
<text transform="translate(249.5,729.8) scale(1,1.1)" text-anchor="start" style="font-family:'Liberation Mono', monospace;font-size:10px;fill:#000;white-space:pre" xml:space="preserve">15. perfedge.vercel...4c62ddf6969eeca.js</text>
<text transform="translate(249.5,746.8) scale(1,1.1)" text-anchor="start" style="font-family:'Liberation Mono', monospace;font-size:10px;fill:#000;white-space:pre" xml:space="preserve">16. perfedge.vercel...6429296051ace26.js</text>
<text transform="translate(249.5,763.8) scale(1,1.1)" text-anchor="start" style="font-family:'Liberation Mono', monospace;font-size:10px;fill:#000;white-space:pre" xml:space="preserve">17. perfedge.vercel...1bb656e4d9c828e.js</text>
<circle cx="256.7" cy="521.4" r="6.6" fill="#f38a1c"/>
<path d="M252.6 517.3 L260.8 525.5 M260.8 517.3 L252.6 525.5" stroke="#fff" stroke-width="1.6"/>
<rect x="671" y="472" width="2" height="298" fill="#ffb300" />
<rect x="671" y="786" width="2" height="147" fill="#ffb300" />
<rect x="695" y="472" width="2" height="298" fill="#33dd00" />
<rect x="695" y="786" width="2" height="147" fill="#33dd00" />
<rect x="768" y="472" width="2" height="298" fill="#c0c0ff" />
<rect x="768" y="786" width="2" height="147" fill="#c0c0ff" />
<rect x="775" y="472" width="2" height="298" fill="#0000ff" />
<rect x="775" y="786" width="2" height="147" fill="#0000ff" />
<line x1="786.0" y1="471" x2="786.0" y2="770" stroke="#007a00" stroke-width="2" stroke-dasharray="4 4"/>
<line x1="786.0" y1="787" x2="786.0" y2="933" stroke="#007a00" stroke-width="2" stroke-dasharray="4 4"/>
<rect x="796" y="472" width="2" height="298" fill="#1fae1f" />
<rect x="796" y="786" width="2" height="147" fill="#1fae1f" />
<line x1="678.0" y1="475" x2="678.0" y2="770" stroke="#ff6a00" stroke-width="2" stroke-dasharray="4 4"/>
<line x1="678.0" y1="787" x2="678.0" y2="934" stroke="#ff6a00" stroke-width="2" stroke-dasharray="4 4"/>
<rect x="677" y="950" width="2" height="1.5" fill="#ff6a00" />
<rect x="493.6" y="485" width="13.399999999999977" height="7" fill="url(#gdns)" />
<rect x="507" y="485" width="12" height="7" fill="url(#gcon)" />
<rect x="519" y="485" width="22" height="7" fill="url(#gssl)" />
<rect x="540" y="481" width="18" height="15" fill="url(#ghtmlL)" />
<rect x="558" y="481" width="4.600000000000023" height="15" fill="url(#ghtmlD)" />
<rect x="566.9" y="480" width="36" height="17" fill="#f0f0f0" />
<text transform="translate(566.5,491.6) scale(1,1.1)" text-anchor="start" style="font-family:'Liberation Mono', monospace;font-size:10px;fill:#000;white-space:pre" xml:space="preserve">182 ms</text>
<rect x="563.2" y="502" width="2.2999999999999545" height="7" fill="url(#gwait)" />
<rect x="565" y="498" width="19" height="15" fill="url(#gimgL)" />
<rect x="584" y="498" width="7" height="15" fill="url(#gimgD)" />
<rect x="595.0" y="497" width="30" height="17" fill="#ffffff" />
<text transform="translate(594.6,508.6) scale(1,1.1)" text-anchor="start" style="font-family:'Liberation Mono', monospace;font-size:10px;fill:#000;white-space:pre" xml:space="preserve">67 ms</text>
<rect x="563.5" y="519" width="2.0" height="7" fill="url(#gwait)" />
<rect x="565" y="515" width="14" height="15" fill="url(#gcssL)" />
<rect x="579" y="515" width="6" height="15" fill="url(#gcssD)" />
<rect x="589.1" y="514" width="30" height="17" fill="#f0f0f0" />
<text transform="translate(588.7,525.6) scale(1,1.1)" text-anchor="start" style="font-family:'Liberation Mono', monospace;font-size:10px;fill:#000;white-space:pre" xml:space="preserve">48 ms</text>
<rect x="568" y="536" width="5.5" height="7" fill="url(#gwait)" />
<rect x="573.5" y="532" width="16.5" height="15" fill="url(#gjsL)" />
<rect x="590" y="532" width="2.7999999999999545" height="15" fill="url(#gjsD)" />
<rect x="597.0" y="531" width="30" height="17" fill="#ffffff" />
<text transform="translate(596.6,542.6) scale(1,1.1)" text-anchor="start" style="font-family:'Liberation Mono', monospace;font-size:10px;fill:#000;white-space:pre" xml:space="preserve">51 ms</text>
<rect x="568" y="553" width="5.5" height="7" fill="url(#gwait)" />
<rect x="573.5" y="549" width="18.700000000000045" height="15" fill="url(#gjsL)" />
<rect x="592.2" y="549" width="36.59999999999991" height="15" fill="url(#gjsD)" />
<rect x="633.0" y="548" width="36" height="17" fill="#f0f0f0" />
<text transform="translate(632.6,559.6) scale(1,1.1)" text-anchor="start" style="font-family:'Liberation Mono', monospace;font-size:10px;fill:#000;white-space:pre" xml:space="preserve">145 ms</text>
<rect x="568.2" y="570" width="5.0" height="7" fill="url(#gwait)" />
<rect x="573.2" y="566" width="56.799999999999955" height="15" fill="url(#gjsL)" />
<rect x="630" y="566" width="28.799999999999955" height="15" fill="url(#gjsD)" />
<rect x="663.3" y="565" width="36" height="17" fill="#ffffff" />
<text transform="translate(662.9,576.6) scale(1,1.1)" text-anchor="start" style="font-family:'Liberation Mono', monospace;font-size:10px;fill:#000;white-space:pre" xml:space="preserve">225 ms</text>
<rect x="569" y="587" width="5" height="7" fill="url(#gwait)" />
<rect x="574" y="583" width="54" height="15" fill="url(#gjsL)" />
<rect x="628" y="583" width="2" height="15" fill="url(#gjsD)" />
<rect x="634.1" y="582" width="36" height="17" fill="#f0f0f0" />
<text transform="translate(633.7,593.6) scale(1,1.1)" text-anchor="start" style="font-family:'Liberation Mono', monospace;font-size:10px;fill:#000;white-space:pre" xml:space="preserve">147 ms</text>
<rect x="571" y="604" width="3" height="7" fill="url(#gwait)" />
<rect x="574" y="600" width="85" height="15" fill="url(#gjsL)" />
<rect x="659" y="600" width="7" height="15" fill="url(#gjsD)" />
<rect x="670.2" y="599" width="36" height="17" fill="#ffffff" />
<text transform="translate(669.8000000000001,610.6) scale(1,1.1)" text-anchor="start" style="font-family:'Liberation Mono', monospace;font-size:10px;fill:#000;white-space:pre" xml:space="preserve">241 ms</text>
<rect x="571" y="621" width="3" height="7" fill="url(#gwait)" />
<rect x="574" y="617" width="92" height="15" fill="url(#gjsL)" />
<rect x="666" y="617" width="24" height="15" fill="url(#gjsD)" />
<rect x="694.2" y="616" width="36" height="17" fill="#f0f0f0" />
<text transform="translate(693.8000000000001,627.6) scale(1,1.1)" text-anchor="start" style="font-family:'Liberation Mono', monospace;font-size:10px;fill:#000;white-space:pre" xml:space="preserve">303 ms</text>
<rect x="572" y="638" width="2" height="7" fill="url(#gwait)" />
<rect x="574" y="634" width="116" height="15" fill="url(#gjsL)" />
<rect x="690" y="634" width="3" height="15" fill="url(#gjsD)" />
<rect x="697.0" y="633" width="36" height="17" fill="#ffffff" />
<text transform="translate(696.6,644.6) scale(1,1.1)" text-anchor="start" style="font-family:'Liberation Mono', monospace;font-size:10px;fill:#000;white-space:pre" xml:space="preserve">311 ms</text>
<rect x="572" y="655" width="2" height="7" fill="url(#gwait)" />
<rect x="574" y="651" width="115" height="15" fill="url(#gjsL)" />
<rect x="689" y="651" width="1.5" height="15" fill="url(#gjsD)" />
<rect x="695.2" y="650" width="36" height="17" fill="#f0f0f0" />
<text transform="translate(694.8000000000001,661.6) scale(1,1.1)" text-anchor="start" style="font-family:'Liberation Mono', monospace;font-size:10px;fill:#000;white-space:pre" xml:space="preserve">306 ms</text>
<rect x="573" y="672" width="1" height="7" fill="url(#gwait)" />
<rect x="574" y="668" width="118" height="15" fill="url(#gothL)" />
<rect x="692" y="668" width="4.7000000000000455" height="15" fill="url(#gothD)" />
<rect x="701.2" y="667" width="36" height="17" fill="#ffffff" />
<text transform="translate(700.8000000000001,678.6) scale(1,1.1)" text-anchor="start" style="font-family:'Liberation Mono', monospace;font-size:10px;fill:#000;white-space:pre" xml:space="preserve">322 ms</text>
<rect x="704" y="685" width="13" height="15" fill="url(#gimgL)" />
<rect x="717" y="685" width="2" height="15" fill="url(#gimgD)" />
<rect x="723.2" y="684" width="66" height="17" fill="#ffff60" />
<text transform="translate(722.8000000000001,695.6) scale(1,1.1)" text-anchor="start" style="font-family:'Liberation Mono', monospace;font-size:10px;fill:#000;white-space:pre" xml:space="preserve">35 ms (304)</text>
<rect x="732" y="706" width="1.5" height="7" fill="url(#gwait)" />
<rect x="733.5" y="702" width="14.5" height="15" fill="url(#gothL)" />
<rect x="748" y="702" width="2" height="15" fill="url(#gothD)" />
<rect x="754.2" y="701" width="30" height="17" fill="#ffffff" />
<text transform="translate(753.8000000000001,712.6) scale(1,1.1)" text-anchor="start" style="font-family:'Liberation Mono', monospace;font-size:10px;fill:#000;white-space:pre" xml:space="preserve">44 ms</text>
<rect x="751" y="719" width="14" height="15" fill="url(#gjsL)" />
<rect x="765" y="719" width="10" height="15" fill="url(#gjsD)" />
<rect x="779.1" y="718" width="30" height="17" fill="#f0f0f0" />
<text transform="translate(778.7,729.6) scale(1,1.1)" text-anchor="start" style="font-family:'Liberation Mono', monospace;font-size:10px;fill:#000;white-space:pre" xml:space="preserve">60 ms</text>
<rect x="752" y="740" width="3" height="7" fill="url(#gwait)" />
<rect x="755" y="736" width="19.5" height="15" fill="url(#gjsL)" />
<rect x="774.5" y="736" width="2.2999999999999545" height="15" fill="url(#gjsD)" />
<rect x="780.9" y="735" width="30" height="17" fill="#ffffff" />
<text transform="translate(780.5,746.6) scale(1,1.1)" text-anchor="start" style="font-family:'Liberation Mono', monospace;font-size:10px;fill:#000;white-space:pre" xml:space="preserve">54 ms</text>
<rect x="754" y="757" width="1.5" height="7" fill="url(#gwait)" />
<rect x="755.5" y="753" width="20.5" height="15" fill="url(#gjsL)" />
<rect x="776" y="753" width="2" height="15" fill="url(#gjsD)" />
<rect x="782.1" y="752" width="30" height="17" fill="#f0f0f0" />
<text transform="translate(781.7,763.6) scale(1,1.1)" text-anchor="start" style="font-family:'Liberation Mono', monospace;font-size:10px;fill:#000;white-space:pre" xml:space="preserve">57 ms</text>
<rect x="697" y="570.0" width="14.700000000000045" height="7" fill="#ffaaff" />
<rect x="732" y="570.0" width="9" height="7" fill="#ffaaff" />
<rect x="729" y="654.0" width="4" height="9" fill="#ffaaff" />
<rect x="764" y="621.0" width="4" height="7" fill="#ffaaff" />
<rect x="673.2" y="553.0" width="3.7999999999999545" height="7" fill="#ffaaff" />
<rect x="711" y="606.0" width="2" height="3" fill="#ffaaff" />
<rect x="813.8" y="740.0" width="2.2000000000000455" height="7" fill="#ffaaff" />
<rect x="769" y="571.5" width="4" height="4" fill="#ffaaff" />
<rect x="559.4" y="481" width="0.8" height="15" fill="#d8e8f0" />
<rect x="712.5" y="539" width="1.2" height="1.2" fill="#ffaaff" />
<rect x="728.5" y="539" width="1.2" height="1.2" fill="#ffaaff" />
<rect x="732.5" y="539" width="1.2" height="1.2" fill="#ffaaff" />
<rect x="738.5" y="539" width="1.2" height="1.2" fill="#ffaaff" />
<rect x="787.5" y="539" width="1.2" height="1.2" fill="#ffaaff" />
<rect x="789" y="539" width="1.2" height="1.2" fill="#ffaaff" />
<rect x="813.5" y="539" width="1.2" height="1.2" fill="#ffaaff" />
<rect x="815" y="539" width="1.2" height="1.2" fill="#ffaaff" />
<rect x="706.5" y="556" width="1.2" height="1.2" fill="#ffaaff" />
<rect x="708" y="556" width="1.2" height="1.2" fill="#ffaaff" />
<rect x="711" y="556" width="1.2" height="1.2" fill="#ffaaff" />
<rect x="712" y="556" width="1.2" height="1.2" fill="#ffaaff" />
<rect x="727.5" y="556" width="1.2" height="1.2" fill="#ffaaff" />
<rect x="732.5" y="556" width="1.2" height="1.2" fill="#ffaaff" />
<rect x="734" y="556" width="1.2" height="1.2" fill="#ffaaff" />
<rect x="737.5" y="556" width="1.2" height="1.2" fill="#ffaaff" />
<rect x="739" y="556" width="1.2" height="1.2" fill="#ffaaff" />
<rect x="740.5" y="556" width="1.2" height="1.2" fill="#ffaaff" />
<rect x="768.5" y="556" width="1.2" height="1.2" fill="#ffaaff" />
<rect x="770" y="556" width="1.2" height="1.2" fill="#ffaaff" />
<rect x="771.5" y="556" width="1.2" height="1.2" fill="#ffaaff" />
<rect x="813.5" y="556" width="1.2" height="1.2" fill="#ffaaff" />
<rect x="815" y="556" width="1.2" height="1.2" fill="#ffaaff" />
<rect x="794" y="624" width="1.2" height="1.2" fill="#ffaaff" />
<rect x="832" y="624" width="1.2" height="1.2" fill="#ffaaff" />
<rect x="870" y="624" width="1.2" height="1.2" fill="#ffaaff" />
<rect x="908" y="624" width="1.2" height="1.2" fill="#ffaaff" />
<rect x="946" y="624" width="1.2" height="1.2" fill="#ffaaff" />
<rect x="984" y="624" width="1.2" height="1.2" fill="#ffaaff" />
<rect x="1022" y="624" width="1.2" height="1.2" fill="#ffaaff" />
<rect x="1060" y="624" width="1.2" height="1.2" fill="#ffaaff" />
<rect x="1098" y="624" width="1.2" height="1.2" fill="#ffaaff" />
<rect x="1136" y="624" width="1.2" height="1.2" fill="#ffaaff" />
<rect x="1174" y="624" width="1.2" height="1.2" fill="#ffaaff" />
<rect x="1212" y="624" width="1.2" height="1.2" fill="#ffaaff" />
<rect x="1250" y="624" width="1.2" height="1.2" fill="#ffaaff" />
<rect x="813.3" y="726" width="1.5" height="1.5" fill="#ffaaff" />
<rect x="815.5" y="760.5" width="2" height="1.2" fill="#ffaaff" />
<rect x="243" y="786" width="1012" height="1.2" fill="#000" />
<rect x="243" y="835" width="1012" height="1.2" fill="#000" />
<rect x="243" y="884" width="1012" height="1.2" fill="#000" />
<rect x="243" y="933" width="1012" height="1.2" fill="#000" />
<rect x="252.8" y="809.6" width="36.2" height="1.3" fill="#ff8000" />
<text transform="translate(292,815) scale(1,1.1)" text-anchor="start" style="font-family:'Liberation Mono', monospace;font-size:10px;fill:#000;white-space:pre" xml:space="preserve">CPU Utilization</text>
<rect x="252.8" y="858.6" width="36.2" height="1.3" fill="#008000" />
<text transform="translate(292,864) scale(1,1.1)" text-anchor="start" style="font-family:'Liberation Mono', monospace;font-size:10px;fill:#000;white-space:pre" xml:space="preserve">Bandwidth In (0 - 5,000 Kbps)</text>
<text transform="translate(292,913.3) scale(1,1.1)" text-anchor="start" style="font-family:'Liberation Mono', monospace;font-size:10px;fill:#000;white-space:pre" xml:space="preserve">Browser Main Thread</text>
<text transform="translate(292,947) scale(1,1.1)" text-anchor="start" style="font-family:'Liberation Mono', monospace;font-size:10px;fill:#000;white-space:pre" xml:space="preserve">Long Tasks</text>
<polyline fill="none" stroke="#ff8000" stroke-width="1.4" points="494,822.4 532.5,822.4 532.5,817.4 570.4,817.4 570.4,825 608.4,825 608.4,801.7 646.3,801.7 646.3,809.4 685.3,809.4 685.3,810.3 723.4,810.3 723.4,809.4 761.5,809.4 761.5,799.4 799.6,799.4 799.6,816.4 837.6,816.4 837.6,832.3 876.6,832.3 876.6,828.7 914.8,828.7 914.8,832.2 952.2,832.2 952.2,830.3 1067.6,830.3 1067.6,828.5 1105.3,828.5 1105.3,827.1 1143.2,827.1 1143.2,823.4 1181.4,823.4 1181.4,830.3 1219.7,830.3 1219.7,831.4 1253,831.4"/>
<polyline fill="none" stroke="#008000" stroke-width="1.4" points="494,883.4 570.4,883.4 570.4,875.5 608.4,875.5 608.4,836.6 685.3,836.6 685.3,857.5 723.4,857.5 723.4,883.3 761.5,883.3 761.5,882.4 798.9,882.4 798.9,869.5 837.6,869.5 837.6,883.4 1253,883.4"/>
<path d="M622.3 933 L622.3 921 L623 921 L623 885.5 L664.7 885.5 L664.7 933 Z" fill="#9b80e4"/>
<path d="M698 933 L698 901 L699 901 L699 885.5 L707 885.5 L707 894 L708 894 L708 905 L709.3 905 L709.3 885.5 L712 885.5 L712 900 L713 900 L713 928 L713.8 928 L713.8 933 Z" fill="#f0be52"/>
<path d="M728 933 L728 905 L729 905 L729 901 L730 901 L730 885.5 L733 885.5 L733 894 L734 894 L734 885.5 L735 885.5 L735 890 L736 890 L736 885.5 L738 885.5 L738 901 L739 901 L739 891 L740 891 L740 913 L741.5 913 L741.5 909 L742.5 909 L742.5 926 L743 926 L743 933 Z" fill="#f0be52"/>
<path d="M666 933 L666 926 L668 926 L668 933 Z" fill="#f0be52"/>
<path d="M673 933 L673 910 L674 910 L674 891 L675 891 L675 920 L676 920 L676 933 Z" fill="#f0be52"/>
<path d="M765 933 L765 900 L766 900 L766 886 L768 886 L768 895 L770 895 L770 918 L772 918 L772 926 L773.5 926 L773.5 933 Z" fill="#f0be52"/>
<path d="M788 933 L788 905 L789.5 905 L789.5 886 L791 886 L791 910 L792 910 L792 933 Z" fill="#b0b0b0"/>
<path d="M795 933 L795 920 L797 920 L797 933 Z" fill="#f0be52"/>
<path d="M813 933 L813 913 L815 913 L815 898.7 L816 898.7 L816 925 L817.6 925 L817.6 933 Z" fill="#f0be52"/>
<rect x="539" y="930" width="2" height="3" fill="#6aa6e8" />
<path d="M601 933 L601 927 L602 927 L602 909 L603 909 L603 933 Z" fill="#b8b8b8"/>
<rect x="605" y="926" width="3" height="7" fill="#78aee8" />
<rect x="607.5" y="929" width="2.5" height="4" fill="#f0be52" />
<rect x="908.7" y="926" width="1.2" height="1.5" fill="#b8b8b8" />
<rect x="908.7" y="928.5" width="1.2" height="2.7" fill="#f0be52" />
<rect x="908.7" y="929.5" width="1.2" height="3.5" fill="#9b80e4" />
<rect x="946.7" y="926" width="1.2" height="1.5" fill="#b8b8b8" />
<rect x="946.7" y="928.5" width="1.2" height="2.7" fill="#f0be52" />
<rect x="946.7" y="929.5" width="1.2" height="3.5" fill="#9b80e4" />
<rect x="984.7" y="922" width="1.2" height="1.5" fill="#b8b8b8" />
<rect x="984.7" y="925.5" width="1.2" height="4.5" fill="#f0be52" />
<rect x="984.7" y="929.5" width="1.2" height="3.5" fill="#9b80e4" />
<rect x="1022.7" y="924" width="1.2" height="1.5" fill="#b8b8b8" />
<rect x="1022.7" y="927.0" width="1.2" height="3.6" fill="#f0be52" />
<rect x="1022.7" y="929.5" width="1.2" height="3.5" fill="#9b80e4" />
<rect x="1060.7" y="920" width="1.2" height="1.5" fill="#b8b8b8" />
<rect x="1060.7" y="924.0" width="1.2" height="5.4" fill="#f0be52" />
<rect x="1060.7" y="929.5" width="1.2" height="3.5" fill="#9b80e4" />
<rect x="1098.7" y="926" width="1.2" height="1.5" fill="#b8b8b8" />
<rect x="1098.7" y="928.5" width="1.2" height="2.7" fill="#f0be52" />
<rect x="1098.7" y="929.5" width="1.2" height="3.5" fill="#9b80e4" />
<rect x="1136.7" y="924" width="1.2" height="1.5" fill="#b8b8b8" />
<rect x="1136.7" y="927.0" width="1.2" height="3.6" fill="#f0be52" />
<rect x="1136.7" y="929.5" width="1.2" height="3.5" fill="#9b80e4" />
<rect x="1174.7" y="926" width="1.2" height="1.5" fill="#b8b8b8" />
<rect x="1174.7" y="928.5" width="1.2" height="2.7" fill="#f0be52" />
<rect x="1174.7" y="929.5" width="1.2" height="3.5" fill="#9b80e4" />
<rect x="1212.7" y="926" width="1.2" height="1.5" fill="#b8b8b8" />
<rect x="1212.7" y="928.5" width="1.2" height="2.7" fill="#f0be52" />
<rect x="1212.7" y="929.5" width="1.2" height="3.5" fill="#9b80e4" />
<rect x="1250.7" y="926" width="1.2" height="1.5" fill="#b8b8b8" />
<rect x="1250.7" y="928.5" width="1.2" height="2.7" fill="#f0be52" />
<rect x="1250.7" y="929.5" width="1.2" height="3.5" fill="#9b80e4" />
<rect x="697" y="934" width="557" height="16" fill="#b3e996" />
<rect x="493" y="454" width="1.2" height="496" fill="#000" />
<rect x="243.5" y="454.5" width="1011" height="496" fill="none" stroke="#000" stroke-width="1.2"/>
<rect x="871" y="435" width="2.2" height="530.5" fill="#dd0000" />
<circle cx="873" cy="429.7" r="5" fill="#fff" stroke="#ee0000" stroke-width="1.5"/></svg></body></html>
